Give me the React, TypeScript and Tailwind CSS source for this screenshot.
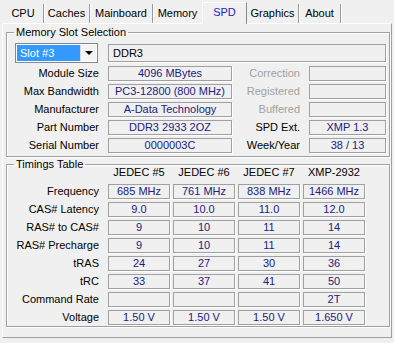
import React from 'react';

const box =
  'h-[15px] flex items-center justify-center border border-[#a0a0a0] shadow-[1px_1px_0_#fff] bg-[#f0f0f0] text-[#20207f] leading-[13px] whitespace-nowrap';

const tabs = [
  { name: 'CPU', w: 'w-[41px]' },
  { name: 'Caches', w: 'w-[46px]' },
  { name: 'Mainboard', w: 'w-[63px]' },
  { name: 'Memory', w: 'w-[49px]', noSep: true },
  { name: 'SPD', w: 'w-[45px]', active: true },
  { name: 'Graphics', w: 'w-[52px]' },
  { name: 'About', w: 'w-[42px]' },
];

const slotRows = [
  ['Module Size', '4096 MBytes', 'Correction', '', false],
  ['Max Bandwidth', 'PC3-12800 (800 MHz)', 'Registered', '', false],
  ['Manufacturer', 'A-Data Technology', 'Buffered', '', false],
  ['Part Number', 'DDR3 2933 2OZ', 'SPD Ext.', 'XMP 1.3', true],
  ['Serial Number', '0000003C', 'Week/Year', '38 / 13', true],
] as const;

const timingCols = ['JEDEC #5', 'JEDEC #6', 'JEDEC #7', 'XMP-2932'];

const timingRows: [string, string[]][] = [
  ['Frequency', ['685 MHz', '761 MHz', '838 MHz', '1466 MHz']],
  ['CAS# Latency', ['9.0', '10.0', '11.0', '12.0']],
  ['RAS# to CAS#', ['9', '10', '11', '14']],
  ['RAS# Precharge', ['9', '10', '11', '14']],
  ['tRAS', ['24', '27', '30', '36']],
  ['tRC', ['33', '37', '41', '50']],
  ['Command Rate', ['', '', '', '2T']],
  ['Voltage', ['1.50 V', '1.50 V', '1.50 V', '1.650 V']],
];

function Group({ title, className, children }: { title: string; className?: string; children: React.ReactNode }) {
  return (
    <fieldset
      className={`border border-[#a0a0a0] shadow-[inset_1px_1px_0_#fff,1px_1px_0_#fff] ${className ?? ''}`}
    >
      <legend className="ml-[7px] px-[2px] leading-[13px] text-black">{title}</legend>
      {children}
    </fieldset>
  );
}

export default function App() {
  return (
    <div
      className="w-[394px] h-[343px] bg-[#f0f0f0] text-[11px] text-black overflow-hidden"
      style={{ fontFamily: '"Liberation Sans", Arial, sans-serif' }}
    >
      {/* tab strip */}
      <div className="h-[23px] flex items-end pl-[3px]">
        {tabs.map((t) =>
          t.active ? (
            <div
              key={t.name}
              className={`${t.w} h-[22px] -mb-[1px] relative z-10 bg-[#f0f0f0] border-l border-t border-white border-r border-r-[#8a8a8a] flex items-center justify-center pb-[2px] text-[#2222c0]`}
            >
              {t.name}
            </div>
          ) : (
            <div
              key={t.name}
              className={`${t.w} h-[19px] flex items-center justify-center pb-[1px] ${
                t.noSep ? '' : 'border-r border-[#9a9a9a] shadow-[1px_0_0_#fff]'
              }`}
            >
              {t.name}
            </div>
          )
        )}
      </div>

      {/* panel */}
      <div className="ml-[2px] w-[390px] h-[315px] border border-t-white border-l-white border-r-[#a0a0a0] border-b-[#a0a0a0] pl-[3px] pr-[1px] pt-[2px]">
        <Group title="Memory Slot Selection" className="pb-[3px]">
          <div className="flex items-center mt-[4px] h-[20px]">
            <div className="ml-[8px] w-[83px] h-[20px] border border-[#828790] bg-white flex p-[1px]">
              <div className="flex-1 bg-[#3399ff] text-white flex items-center pl-[3px]">Slot #3</div>
              <div className="w-[16px] flex items-center justify-center bg-[#f4f4f4] border-l border-[#d8d8d8]">
                <div className="w-0 h-0 border-l-[4px] border-r-[4px] border-t-[4px] border-l-transparent border-r-transparent border-t-black" />
              </div>
            </div>
            <div className="ml-[10px] w-[278px] h-[18px] border border-[#a0a0a0] shadow-[1px_1px_0_#fff] flex items-center pl-[4px]">
              DDR3
            </div>
          </div>
          <div className="mt-[3px] flex flex-col gap-[3px]">
            {slotRows.map(([l, v, rl, rv, enabled]) => (
              <div key={l} className="flex items-center">
                <div className="w-[92px] text-right leading-[13px]">{l}</div>
                <div className={`ml-[9px] w-[124px] ${box}`}>{v}</div>
                <div className={`w-[68px] text-right leading-[13px] ${enabled ? 'text-black' : 'text-[#a0a0a0]'}`}>
                  {rl}
                </div>
                <div className={`ml-[9px] w-[77px] ${box}`}>{rv}</div>
              </div>
            ))}
          </div>
        </Group>

        <Group title="Timings Table" className="mt-[1px] pb-[1px]">
          <div className="flex -mt-[5px] h-[13px] leading-[13px]">
            <div className="w-[92px]" />
            <div className="ml-[9px] flex gap-[3px]">
              {timingCols.map((c) => (
                <div key={c} className="w-[62px] text-center">
                  {c}
                </div>
              ))}
            </div>
          </div>
          <div className="mt-[5px] flex flex-col gap-[3px]">
            {timingRows.map(([l, vals]) => (
              <div key={l} className="flex items-center">
                <div className="w-[92px] text-right leading-[13px]">{l}</div>
                <div className="ml-[9px] flex gap-[3px]">
                  {vals.map((v, i) => (
                    <div key={i} className={`w-[62px] ${box}`}>
                      {v}
                    </div>
                  ))}
                </div>
              </div>
            ))}
          </div>
        </Group>
      </div>
    </div>
  );
}
